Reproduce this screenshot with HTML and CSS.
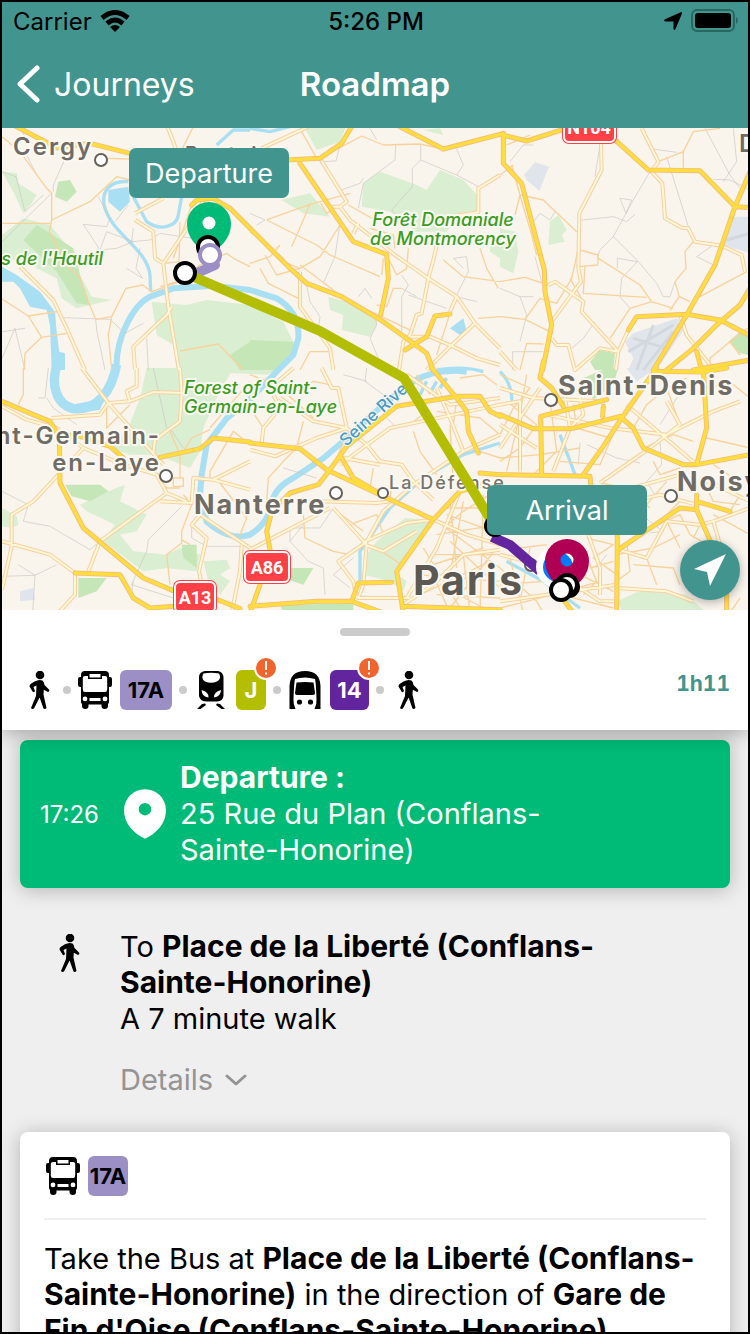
FILE: index.html
```html
<!DOCTYPE html>
<html lang="en">
<head>
<meta charset="utf-8">
<meta name="viewport" content="width=device-width, initial-scale=1">
<title>Roadmap</title>
<link rel="stylesheet" href="styles.css">
</head>
<body>
<svg class="sprite" aria-hidden="true">
  <symbol id="walk" viewBox="0 0 34 38">
    <circle cx="18" cy="4" r="4.3"/>
    <path d="M12.500 10.500Q17 8 20.500 9.500Q22 10.500 22.500 14L27 18.500Q28 20.500 26 21L21.800 18.800L21.500 23.500L24.500 37Q23 38.500 21.500 37.500L17.600 26.500L12 37.500Q10 38.500 9 37L14 25L14.500 14.500L11.500 16L13 20Q12 22 10.500 20.500L7.500 15.500Q7.500 13.500 9 12.700Z"/>
  </symbol>
  <symbol id="bus" viewBox="0 0 34 38">
    <path fill-rule="evenodd" d="M7 0H27Q31 0 31 4V6H32Q34 6 34 8V14Q34 16 32 16H31V31Q31 32 30 33V35Q30 38 26.800 38Q23.500 38 23.500 35V33.500H10.500V35Q10.500 38 7.300 38Q4 38 4 35V33Q3 32 3 31V16H2Q0 16 0 14V8Q0 6 2 6H3V4Q3 0 7 0ZM11.500 3V6.500H22.500V3ZM4.800 7V18.500Q4.800 21 7 21H27Q29.200 21 29.200 18.500V7Q29.200 5 27 5H24V8H10V5H7Q4.800 5 4.800 7ZM7 25.500A2.400 2.400 0 1 0 7 30.300A2.400 2.400 0 1 0 7 25.500ZM27 25.500A2.400 2.400 0 1 0 27 30.300A2.400 2.400 0 1 0 27 25.500ZM11.500 27V30H22.500V27Z"/>
  </symbol>
  <symbol id="train" viewBox="0 0 34 38">
    <path fill-rule="evenodd" d="M11 0H24Q29 1 29.500 6V25Q29 30 23 30.500H12Q6 30 5 25V6Q5 1 11 0ZM9.500 2.500Q6.500 8 11 10.500Q17 13 23 10.500Q28 8 25 2.500Q17 1 9.500 2.500ZM7.500 19Q8 26 14.500 26.500Q15 21 7.500 19ZM27 19Q19.500 21 20 26.500Q26.500 26 27 19Z"/>
    <path d="M11 32.500L8 33L3 38H6.500L12 34ZM23 32.500L26 33L31 38H27.500L22 34Z"/>
  </symbol>
  <symbol id="metro" viewBox="0 0 34 38">
    <path d="M1.500 38V15Q2 0 17 0Q32 0 32.500 15V38Z"/>
    <path class="metro-body" d="M7 8Q17 5 27 8Q28 12 28.500 28Q29 33 26.500 38H7.500Q5 33 5.500 28Q6 12 7 8Z"/>
    <path d="M8.500 11.500Q17 10.500 25.500 11.500L27 22Q27 24 25 24H9Q7 24 7 22Z"/>
    <circle cx="11.500" cy="31" r="2.600"/><circle cx="22.500" cy="31" r="2.600"/>
  </symbol>
  <symbol id="pin" viewBox="0 0 44 52">
    <path fill-rule="evenodd" d="M22 0A22 22 0 0 1 44 22C44 36 34 46 22 52C10 46 0 36 0 22A22 22 0 0 1 22 0ZM22 14.500A6.500 6.500 0 1 0 22 27.500A6.500 6.500 0 1 0 22 14.500Z"/>
  </symbol>
</svg>

<div class="app">
  <header class="topbar">
    <div class="status">
      <span class="carrier">Carrier
        <svg class="wifi" viewBox="0 0 30 22" aria-hidden="true"><path d="M2 8Q15-3 28 8M7 13.500Q15 6.500 23 13.500"/><path class="wifi-tip" d="M15 22L10 17Q15 13 20 17Z"/></svg>
      </span>
      <span class="clock">5:26 PM</span>
      <span class="indicators">
        <svg class="location" viewBox="0 0 18 18" aria-hidden="true"><path d="M17.300 0Q18.500 0 18 1.500L11.500 17Q10 19 9.500 17V9.500H1.500Q-1 9 1 7.300Z"/></svg>
        <svg class="battery" viewBox="0 0 48 24" aria-hidden="true"><rect class="battery-case" x="1" y="1" width="42" height="21" rx="5"/><rect x="4" y="4" width="36" height="15" rx="3"/><path class="battery-cap" d="M45 8Q49 11.500 45 15Z"/></svg>
      </span>
    </div>
    <nav class="navbar">
      <a class="back" href="#">
        <svg viewBox="0 0 24 38" aria-hidden="true"><path d="M21 3L4 19L21 35"/></svg>Journeys
      </a>
      <h1 class="title">Roadmap</h1>
    </nav>
  </header>

  <section class="map" aria-label="Journey map">
    <svg class="map-canvas" viewBox="2 128 746 482" preserveAspectRatio="xMidYMid slice">
      <defs>
        <g id="avenues">
          <g transform="translate(0 375)"><path d="M60 425L160 525L200 610L255 735M405 265L490 220M405 285L460 320L465 400L490 415L505 545L537 735M490 415L575 290L620 210M515 545L500 570L400 665L405 735M500 0L520 50L530 80"/></g>
          <g transform="translate(750 375)"><path d="M35 70L175 5M210 100L290 230L270 245L300 285L435 390L485 425L535 460L620 515L675 595L750 670M535 460L550 405L565 340L560 320M600 275L685 262L685 190L750 150M535 460L515 565L500 570L480 630L460 650L447 735M245 245L275 245M325 295L310 325M150 440L150 545L240 670L250 735M480 635L540 635L610 665L680 700L750 720M675 595L600 665L530 735M620 515L600 560"/></g>
          <g transform="translate(1500 375)"><path d="M303 55L305 135L238 265L235 430L243 470L155 590M425 10L475 110L455 140L487 175L495 280L545 308L565 310L585 350L665 362L725 390L735 440M145 480L165 470L250 530L245 560L355 680L348 735M355 680L300 670L225 735L205 660L170 660L155 640M0 680L50 735M385 615L355 680M540 570L560 630L630 720"/></g>
          <g transform="translate(0 1104)"><path d="M6 115L80 155L170 180L250 240L370 290L470 320L500 375L560 400M245 0L325 105L400 190L490 290M325 105L390 100L460 72L550 75M325 105L300 140L155 150M410 0L410 55L380 70L390 100M540 0L545 75L540 160L465 215L460 255M500 375L300 520L265 610M250 240L100 400L35 440L35 535L6 665M6 520L80 540L150 560L225 615L225 680L175 735M480 400L575 405L580 330L640 335L750 280M640 335L750 365M600 440L750 540M600 440L575 470L620 510L597 610L603 640M725 530L720 610L695 735"/></g>
          <g transform="translate(750 1104)"><path d="M215 0L245 60L265 60L290 180L350 230L390 280L455 290L490 340L550 395M0 245L75 265L200 210L290 180M35 225L40 180L90 120L60 60L130 0M90 90L190 160L290 180M270 290L420 180L540 155L750 110M390 290L280 270M250 420L345 525L265 580L310 640L320 690M345 530L400 430L490 350L640 250L750 200M205 400L380 405L420 400M345 520L470 465L550 455M0 545L240 420M350 530L340 650L325 690L480 690M550 455L650 500L750 530M470 690L560 540L630 370M345 530L400 550L500 490M460 710L550 650L640 560L750 545M640 250L600 150L560 60M470 20L600 110L750 90"/></g>
          <g transform="translate(1500 1104)"><path d="M0 60L100 90L300 100M140 140L330 180L500 200L640 130L720 100M380 110L590 290M300 345L450 240L540 170L500 100M0 240L120 60M0 110L60 100L60 310M210 180L250 140L240 90M350 660L500 670L580 700M355 545L440 570L500 460L600 470L640 460L660 530M640 460L750 420M400 400L480 380L590 410M600 330L750 400M360 370L540 320M0 700L350 650M0 560L120 590M240 660L300 700L350 700M265 500L300 600L300 680M0 170L110 240M190 60L210 180L160 310"/></g>
        </g>
        <g id="highways">
          <g transform="translate(0 375)"><path d="M40 0L170 68L270 55L390 85M575 240L590 225L640 220L690 250L750 310"/></g>
          <g transform="translate(750 375)"><path d="M110 105L210 100L275 55L305 5M0 310L120 430L170 475L275 515L400 590L490 655L530 685L550 735M150 115L310 350L410 388L415 460L392 570M450 5L580 72L750 28M465 675L530 635L555 573L600 567"/></g>
          <g transform="translate(1500 375)"><path d="M0 28L80 48L200 10M10 25L10 115L65 175L133 435L135 500L155 600L128 735M340 40L445 135L600 137L705 245L750 248M750 140L705 245L645 420L560 570L460 735M385 615L410 575L560 568L660 585L750 632M750 490L720 540L650 600L580 670L500 735M590 680L605 735M580 735L750 705"/></g>
          <g transform="translate(0 1104)"><path d="M6 100L100 140L150 160L178 205L180 345L250 480L430 630L525 670M180 200L240 205L330 235L370 270M480 268L600 242L640 210L750 222M225 615L360 620L400 690L450 720L525 715M640 690L720 722"/></g>
          <g transform="translate(750 1104)"><path d="M0 225L150 242L230 305L390 380L550 455L630 370L700 350M240 305L290 235L440 115L620 85L690 85L720 130L750 145M240 305L205 350L120 375L65 430L50 490L60 545M550 455L440 610L460 735M545 0L620 90L650 130L655 190L685 255M275 270L310 330L420 395M0 715L200 700L305 700L325 645L425 643M305 700L400 735M0 735L30 650M460 715L750 725M690 315L750 320"/></g>
          <g transform="translate(1500 1104)"><path d="M130 -20L120 30L155 60L190 115M0 140L100 182L215 182L360 145L400 180L430 240L550 290L590 290L620 180L610 0M125 320L122 145L320 95M0 320L270 325L272 350M250 320L310 235L365 150L470 0M460 10L610 12L680 0M590 290L750 260M590 380L590 425L640 540L680 640L680 735M590 400L690 430M355 545L540 420L590 425M352 500L350 735M310 115L308 145M150 640L220 735"/></g>
        </g>
      </defs>
      <rect class="land" x="0" y="126" width="750" height="486"/>
      <g transform="scale(.33333)">
        <g class="park">
          <path transform="translate(0 375)" d="M6 140L50 145L55 175L110 210L95 235L70 265L40 200ZM6 330L70 280L150 300L225 390L240 450L275 515L335 525L230 550L185 520L170 460L110 430L60 400L6 410ZM455 530L560 540L620 525L750 540V735H530L520 660L470 630Z"/>
          <path transform="translate(750 375)" d="M160 0H290L270 50L200 75ZM520 15L570 10L580 30ZM95 225L180 205L240 275L160 265ZM340 175L390 140L500 180L530 195L570 135L640 165L690 220L690 260L620 280L590 320L500 320L420 260L335 245ZM235 515L330 540L380 570L380 600L360 635L275 615L280 570L240 555ZM720 340L750 330V400L720 380ZM0 540L100 590L130 650L80 735H0Z"/>
          <path transform="translate(1500 375)" d="M150 290L175 270L200 315L185 330L195 350L145 360ZM0 310L45 320L55 380L40 445L0 425Z"/>
          <path transform="translate(0 1104)" d="M440 0H700L650 90L610 180L600 250L570 300L470 260L390 260L330 240L385 180L420 90ZM240 410L325 370L375 350L360 400L440 440L410 490L360 500L400 550L500 560L540 540L600 560L590 610L500 600L430 610L310 520L345 470L260 430ZM610 580L680 575L690 600L660 620L690 640L660 680L625 640ZM6 420L50 445L55 470L35 480L6 475Z"/>
          <path transform="translate(750 1104)" d="M380 520L465 450L540 455L520 500L430 610L470 640L460 670L420 640L340 620L350 560ZM-60 0H100L50 20L-60 15Z"/>
          <path transform="translate(1500 1104)" d="M350 700L440 660L560 680L620 735H370Z"/>
        </g>
        <g class="wood">
          <path transform="translate(0 375)" d="M175 170L210 165L230 200L200 230L165 215ZM110 300L220 370L240 450L270 540L230 535L170 440L70 345ZM750 650L690 690L720 735H750Z"/>
          <path transform="translate(750 375)" d="M0 645L130 650L130 690L80 735H0Z"/>
          <path transform="translate(1500 375)" d="M270 710L300 675L345 685L340 735H285ZM685 650L720 620L750 640V690L720 685Z"/>
          <path transform="translate(0 1104)" d="M195 350L300 350L325 370L270 400L215 385ZM545 530L590 530L590 600L550 570ZM235 630L320 630L290 670L235 690Z"/>
          <path transform="translate(750 1104)" d="M120 600L190 600L160 650L100 630ZM90 712L310 705V735H100Z"/>
          <path transform="translate(1500 1104)" d="M250 30L310 5L355 0L340 50L280 95L265 70Z"/>
        </g>
        <g class="airport">
          <path transform="translate(1500 375)" d="M72 150L105 112L147 125L118 197L80 165ZM700 275H750V385L670 360ZM375 650L400 625L530 580L560 600L470 735H385L400 700Z"/>
          <path transform="translate(0 1104)" d="M60 670L100 660L105 695L60 700Z"/>
          <path transform="translate(1500 1104)" d="M380 0H470L410 40Z"/>
        </g>
        <path class="runway" transform="translate(1500 375)" d="M385 680L520 600M400 640L500 670M410 735L460 600M430 735L520 620M680 345L750 325"/>
        <g class="lake">
          <path transform="translate(0 375)" d="M325 195L385 185L390 230L360 260L325 230ZM6 425L50 450L120 500L165 560L170 620L178 680L195 685V735H155L150 600L140 555L90 545L60 490L40 470L6 470Z"/>
          <path transform="translate(750 375)" d="M600 610L640 580L650 620L630 630Z"/>
          <path transform="translate(0 1104)" d="M215 110L290 95L315 90L300 125L240 135Z"/>
        </g>
        <g class="river thin">
          <path transform="translate(0 375)" d="M385 170C330 165 300 200 315 250C340 330 440 370 450 450L452 500M400 215L440 290C480 320 530 305 535 270L545 215M750 15L700 15L650 60"/>
          <path transform="translate(750 375)" d="M0 10L60 20L120 5M560 735Q640 722 700 740"/>
          <path transform="translate(750 1104)" d="M330 640L330 550L420 420L520 330L640 260L750 225M510 80L530 40M540 75L560 40M570 60L590 30"/>
          <path transform="translate(1500 1104)" d="M180 200L225 320M20 580L130 640L240 720M0 10Q40 50 35 110"/>
        </g>
        <g class="river">
          <path transform="translate(0 375)" d="M350 735C345 640 400 540 450 515L520 490L640 482L750 495L830 520Q900 560 895 640L880 690L830 740L750 823L680 880L620 959L605 1050L600 1110L620 1190Q690 1250 750 1229Q800 1200 815 1140Q820 1090 880 1059L970 1000L1030 949L1150 839L1240 769Q1310 729 1400 740"/>
          <path class="wide" transform="translate(0 1104)" d="M172 -10C150 50 170 110 220 122C290 130 335 70 350 -10"/>
        </g>
        <g class="lane">
          <path transform="translate(0 375)" d="M6 140L48 155L75 260L130 210M205 80L160 180L160 200M80 90L110 150M295 215L330 280L320 305L250 298L300 375L320 320L400 350L350 370L300 375L260 395L190 385M400 310L395 350L450 345L480 325L610 345M345 290L385 240M420 370L408 430L428 460L380 430M190 578L330 583L375 625L430 595M287 583L290 615L315 735M45 610L75 735M45 610L6 700M440 640L445 735M6 350L155 205M75 610L6 620M60 10L90 60"/>
          <path transform="translate(750 375)" d="M270 60L258 108L210 110M437 60L435 105L340 175L325 250M512 60L512 105L620 150L685 185M512 105L487 130L487 185L425 255L475 310M270 295L255 395L220 475M620 72L640 120L620 150M325 515L345 490L365 520M650 395L655 440L620 510M650 395L610 400L640 430M455 450L475 480L455 515L455 620M475 510L590 550M170 480L180 530L210 575L205 610M375 570L380 600L360 640L385 700M0 265L45 285L20 300M275 195L330 175L340 160M360 10L380 45M455 490L500 515M620 515L680 530"/>
          <path transform="translate(1500 375)" d="M460 72L530 82M500 95L565 305M450 140L400 225L378 265L340 335L300 375L290 400M340 335L415 410L470 475L490 515L510 515L525 470M245 285L340 275L380 290L405 268M360 220L395 225L378 265ZM300 60L285 155M615 10L690 150L720 190M700 10L710 110L670 170M640 163L690 165L750 195M352 430V400L412 410L365 460L360 515L390 550M285 590L250 640L215 670M640 360L590 395L640 420M30 110L70 60L100 60M100 290L120 265L150 285L165 260M0 490L60 515L80 570L60 650M105 395L125 470M38 735V680H130M60 515H100"/>
          <path transform="translate(0 1104)" d="M145 0L135 90L115 90M140 90L160 120L230 170M6 370L85 410L70 460L150 475L270 545L300 520M460 0L500 180M545 415L445 515L440 550L395 650L520 690M6 625L105 622L170 590M55 590L105 622L98 735M575 470L575 510L620 535L720 535M400 640L395 670M510 180L550 240"/>
          <path transform="translate(750 1104)" d="M350 0L345 40L400 80L400 140L440 180M250 420L210 480L120 480L120 520L175 580L220 600L225 680M280 20L350 40M100 300L200 330M310 570L250 620L300 660M120 520L160 470"/>
          <path transform="translate(1500 1104)" d="M540 75L480 170M260 230L350 270L420 285M480 220L485 290L440 340M440 340L470 390M320 560L290 600M410 430L490 490L450 495M240 225L235 290"/>
        </g>
        <g class="street">
          <path transform="translate(0 375)" d="M6 35L60 80L140 190L155 205V285L148 320L205 425L240 460L265 530L287 583L335 575L378 490L428 480L455 500L540 470M6 295H155M155 285L270 230L350 155L390 165M320 100L390 102M6 522L85 573L170 560M85 573L125 637L75 685L72 735M125 637L200 625M335 578L325 630L335 735M540 290L537 410L490 415M480 485L530 470L600 420L680 385L700 400L750 425M540 678L655 657L730 735M580 5L545 75M575 240L520 400"/>
          <path transform="translate(750 375)" d="M50 285L180 238L300 205M50 285L200 360L240 390L390 455M180 238L125 365M100 410L150 430L210 395L270 300M0 415L60 395L90 360M45 390L80 450L150 430M30 430L55 475L145 520M155 20L200 100M210 100L335 33L400 60L510 57L580 72M475 370L470 430L440 450L415 400M400 400L395 450M455 490L430 490L410 545L380 540M580 405L640 455L750 470M690 370L710 430L745 490M280 520L490 620M150 735L180 680L235 680M200 600L240 625L380 700M600 565L560 690M685 580L750 575M295 240L375 285L370 310M360 310L430 330L435 370M0 320L100 400M210 230L230 265L260 245M150 420L270 510"/>
          <path transform="translate(1500 375)" d="M60 210L130 225L230 320M45 270L60 210L35 120M60 210L95 330L110 390M475 110L550 80L580 20L660 10M550 80V130M240 375L295 390L293 420L240 425M295 400L420 480L455 530L520 550M255 420L250 505L440 517M455 530L390 550L330 640M580 350L555 380L558 430L525 470L538 515L570 530M538 515L510 555M590 520L740 440M0 470L75 457L145 480M0 575L75 583L160 625M75 583L120 520L170 535L215 460L235 370M60 735L80 655L130 657M750 605L690 650L720 690M630 720V700L690 650M0 150L40 120M20 60L90 30M210 460L250 530"/>
          <path transform="translate(0 1104)" d="M70 0V80L55 110M390 110L320 180V120M510 190L540 260V330M630 185L575 210L550 250M630 180L750 40M550 380L575 410L545 490V525L500 560L510 650M545 515L570 530M630 330V310L700 190L750 230M660 345L740 450L720 500M520 330H550V355H520ZM480 340L500 360H540"/>
          <path transform="translate(750 1104)" d="M560 460L750 600M600 400L620 600M640 400L600 620M580 420H750M560 500L750 470M540 560H750M500 620L750 640M540 600L600 735M640 560L660 735M700 380L690 735M560 680L750 690M160 440L165 510L250 550L300 560M50 400L55 330L100 280L140 240M370 300L360 360M490 190L510 250L560 320M600 170L610 350M740 50L700 20L630 30M380 540L455 590M590 440L700 480L750 440M580 480L640 430L720 380M520 600L700 540M600 520L750 660M520 540L640 735M740 540L600 720M0 20L80 50L190 150M440 0L480 60L530 130L480 170M120 80L190 40L240 50M0 120L40 180M160 160L140 240M300 180L260 270M430 320L420 390M300 470L380 440L400 500M260 430L340 490M490 690L720 580M560 130L690 150L750 200M620 90L610 170M690 250L750 270M590 660L700 720M500 20L540 80"/>
          <path transform="translate(1500 1104)" d="M0 20L90 60L40 120L0 200M20 100L110 170L60 240L0 280M80 20L60 140L20 310M150 100L170 250L100 320M220 110L230 180L330 210M0 270L120 260L240 240M180 280L300 290L360 150M300 345L380 360L450 420M430 240L520 200L580 220M620 210L750 240M400 180L440 110L500 60L560 30M500 60L540 170M600 60L700 50L750 90M640 290L700 330M460 280L480 320L540 300M0 510L60 540L140 530M0 600L110 700L130 735M30 570L70 735M0 650L130 640M0 720L160 680L300 640M90 540L60 700M260 510L340 530L280 570L350 620M270 600L340 580M250 540L290 640L250 680M350 560L460 540L540 500M380 520L390 610L350 640M400 590L520 600L540 650M440 570L470 650M450 480L540 440L570 500L640 540M500 460L540 540M360 410L440 410L500 340M640 440L750 500M690 430L720 380M600 470L580 510M540 400L460 480M300 360L360 420M610 340L640 400L720 410M240 620L340 670M180 680L340 720M690 735L720 690M280 390L350 480"/>
        </g>
        <g class="avenue-edge"><use href="#avenues"/></g>
        <g class="avenue"><use href="#avenues"/></g>
        <g class="highway-edge"><use href="#highways"/></g>
        <g class="highway"><use href="#highways"/></g>
      </g>

      <g class="town">
        <text x="13" y="155">Cergy</text>
        <text class="suburb" x="185" y="161">Pontoise</text>
        <text x="739" y="152">D</text>
        <text class="city" x="558" y="395">Saint-Denis</text>
        <text x="161" y="444" text-anchor="end">Saint-Germain-</text>
        <text x="161" y="471" text-anchor="end">en-Laye</text>
        <text class="city" x="194" y="514">Nanterre</text>
        <text class="city" x="677" y="491">Noisy-le-Sec</text>
      </g>
      <text class="district" x="389" y="489">La Défense</text>
      <text class="capital" x="413" y="595">Paris</text>
      <g class="forest">
        <text x="443" y="226" text-anchor="middle">Forêt Domaniale</text>
        <text x="443" y="245" text-anchor="middle">de Montmorency</text>
        <text x="103" y="265" text-anchor="end">s de l'Hautil</text>
        <text x="184" y="394">Forest of Saint-</text>
        <text x="184" y="413">Germain-en-Laye</text>
      </g>
      <text class="water-name" transform="translate(346 447) rotate(-42)">Seine River</text>
      <g class="town-dot">
        <circle cx="101" cy="160" r="6"/><circle cx="551" cy="400" r="6"/><circle cx="166" cy="476" r="6"/>
        <circle cx="336" cy="493" r="6"/><circle cx="383" cy="493" r="5"/><circle cx="671" cy="496" r="6"/><circle cx="531" cy="565" r="6"/>
      </g>
      <g class="shield">
        <rect x="562" y="112" width="55" height="32" rx="7"/><rect class="shield-line" x="564" y="114" width="51" height="28" rx="5"/><text x="589" y="134">N104</text>
        <rect x="243" y="550" width="48" height="34" rx="7"/><rect class="shield-line" x="245" y="552" width="44" height="30" rx="5"/><text x="267" y="574">A86</text>
        <rect x="173" y="580" width="44" height="34" rx="7"/><rect class="shield-line" x="175" y="582" width="40" height="30" rx="5"/><text x="195" y="604">A13</text>
      </g>

      <path class="leg bus-leg" d="M210 256L215 265L197 273"/>
      <path class="leg train-leg" d="M187 274L320 331L404 378L494 525"/>
      <path class="leg metro-leg" d="M492 537L510 545L540 571"/>
      <circle class="stop" cx="495" cy="526" r="9"/>
      <circle class="gps-halo" cx="557" cy="567" r="21"/>
      <circle class="gps" cx="558" cy="567" r="15"/>
      <path class="pin-hole" d="M209 214A9 9 0 1 1 208 214Z"/>
      <use class="pin-start" href="#pin" x="187" y="202" width="44" height="52"/>
      <use class="pin-end" href="#pin" x="545" y="539" width="44" height="52"/>
      <circle class="stop" cx="208" cy="247" r="10"/>
      <circle class="stop bus-stop" cx="210" cy="255" r="10"/>
      <circle class="stop" cx="185" cy="273" r="10"/>
      <circle class="stop" cx="569" cy="587" r="9"/><circle class="stop" cx="567" cy="585" r="10"/>
      <circle class="stop" cx="561" cy="590" r="10"/>
      <g class="callout">
        <rect x="129" y="148" width="160" height="50" rx="7"/><text x="209" y="183">Departure</text>
        <rect x="487" y="485" width="160" height="50" rx="7"/><text x="567" y="520">Arrival</text>
      </g>
    </svg>
    <button class="locate" type="button" aria-label="Centre on my position">
      <svg viewBox="0 0 32 32" aria-hidden="true"><path d="M32 0L16 32L13 18L0 15Z"/></svg>
    </button>
  </section>

  <section class="sheet">
    <div class="handle"></div>
    <div class="summary">
      <div class="modes">
        <svg class="mode"><use href="#walk"/></svg>
        <i class="dot"></i>
        <span class="ride"><svg class="mode"><use href="#bus"/></svg><b class="line line-bus">17A</b></span>
        <i class="dot"></i>
        <span class="ride"><svg class="mode"><use href="#train"/></svg><b class="line line-train">J<svg class="alert" viewBox="0 0 24 24" aria-label="Disruption"><circle cx="12" cy="12" r="11"/><path d="M12 5V14M12 16.500V18.500"/></svg></b></span>
        <i class="dot"></i>
        <span class="ride"><svg class="mode"><use href="#metro"/></svg><b class="line line-metro">14<svg class="alert" viewBox="0 0 24 24" aria-label="Disruption"><circle cx="12" cy="12" r="11"/><path d="M12 5V14M12 16.500V18.500"/></svg></b></span>
        <i class="dot"></i>
        <svg class="mode"><use href="#walk"/></svg>
      </div>
      <span class="duration">1h11</span>
    </div>
  </section>

  <main class="steps">
    <article class="card departure">
      <time class="time">17:26</time>
      <svg class="card-pin" aria-hidden="true"><use href="#pin"/></svg>
      <p class="copy"><strong>Departure :</strong><br>25 Rue du Plan (Conflans-Sainte-Honorine)</p>
    </article>
    <article class="walk">
      <svg class="mode" aria-hidden="true"><use href="#walk"/></svg>
      <div class="walk-body">
        <p class="copy">To <strong>Place de la Liberté (Conflans-Sainte-Honorine)</strong><br>A 7 minute walk</p>
        <button class="details" type="button">Details <svg viewBox="0 0 22 14" aria-hidden="true"><path d="M2 3L11 11L20 3"/></svg></button>
      </div>
    </article>
    <article class="card transit">
      <div class="transit-head"><svg class="mode" aria-hidden="true"><use href="#bus"/></svg><b class="line line-bus compact">17A</b></div>
      <p class="copy">Take the Bus at <strong>Place de la Liberté (Conflans-Sainte-Honorine)</strong> in the direction of <strong>Gare de Fin d'Oise (Conflans-Sainte-Honorine)</strong></p>
    </article>
  </main>
</div>
</body>
</html>
```
FILE: styles.css
```css
* { box-sizing: border-box; }
body { margin: 0; background: #000; color: #000; font-family: Inter, "Liberation Sans", sans-serif; }
p, h1 { margin: 0; }
button { border: 0; padding: 0; background: none; font: inherit; cursor: pointer; }
.sprite { position: absolute; width: 0; height: 0; }
.metro-body { fill: #fff; }

.app { display: flex; flex-direction: column; height: 100vh; border: 2px solid #000; overflow: hidden; background: #efefef; }

/* Header */
.topbar { flex: none; background: #42958e; }
.status { display: grid; grid-template-columns: 1fr auto 1fr; align-items: center; height: 38px; padding: 0 9px 0 11px; font-size: 24px; }
.carrier { display: flex; align-items: center; gap: 8px; }
.wifi { width: 30px; height: 22px; fill: none; stroke: #000; stroke-width: 5; }
.wifi-tip { fill: #000; stroke: none; }
.clock { font-weight: 500; }
.indicators { display: flex; justify-content: flex-end; align-items: center; gap: 9px; }
.location { width: 18px; height: 18px; }
.battery { width: 48px; height: 24px; }
.battery-case { fill: none; stroke: #296760; stroke-width: 2; }
.battery-cap { fill: #296760; }
.navbar { display: grid; grid-template-columns: 1fr auto 1fr; align-items: center; height: 88px; padding: 0 14px; color: #fff; }
.back { display: flex; align-items: center; gap: 14px; color: inherit; text-decoration: none; font-size: 32px; }
.back svg { width: 24px; height: 38px; fill: none; stroke: #fff; stroke-width: 5; stroke-linecap: round; stroke-linejoin: round; }
.title { font-size: 33px; font-weight: 600; }

/* Map */
.map { position: relative; flex: none; width: 100%; aspect-ratio: 746 / 482; overflow: hidden; }
.map-canvas { display: block; width: 100%; height: 100%; }
.land { fill: #f9f4ec; }
.park { fill: #daeed2; }
.wood { fill: #c5e6b6; }
.airport { fill: #dfe5ea; }
.runway { fill: none; stroke: #d2d8de; stroke-width: 9; }
.lake { fill: #a9dff2; }
.river { fill: none; stroke: #a9dff2; stroke-width: 18; stroke-linejoin: round; }
.thin { stroke-width: 10; }
.wide { stroke-width: 28; }
.lane { fill: none; stroke: #cac7c2; stroke-width: 2; }
.street { fill: none; stroke: #f9d29b; stroke-width: 4; stroke-linejoin: round; }
.avenue-edge { fill: none; stroke: #f9cfa2; stroke-width: 12; stroke-linejoin: round; }
.avenue { fill: none; stroke: #fff8d5; stroke-width: 6; stroke-linejoin: round; }
.highway-edge { fill: none; stroke: #f5bb7c; stroke-width: 15; stroke-linejoin: round; stroke-linecap: round; }
.highway { fill: none; stroke: #ffdd3c; stroke-width: 10; stroke-linejoin: round; stroke-linecap: round; }
.town, .district, .capital, .forest, .water-name { paint-order: stroke; stroke: #fbf8f2; stroke-width: 4px; stroke-linejoin: round; }
.town { fill: #6f6b65; font-size: 24px; font-weight: 600; letter-spacing: 2px; }
.suburb { font-size: 20px; }
.city { font-size: 27px; font-weight: 700; }
.district { fill: #77736d; font-size: 18px; font-weight: 500; letter-spacing: 2px; }
.capital { fill: #5c5852; font-size: 41px; font-weight: 700; letter-spacing: 2px; }
.forest { fill: #389d1d; font-size: 18px; font-weight: 500; font-style: italic; }
.water-name { fill: #4a9cc4; font-size: 17px; font-weight: 500; stroke-width: 2px; }
.town-dot { fill: #fff; stroke: #64605b; stroke-width: 2; }
.shield { fill: #ff4147; font-size: 18px; font-weight: 700; font-family: Roboto, "Liberation Sans", sans-serif; }
.shield-line { fill: none; stroke: #fff; stroke-width: 2; }
.shield text { fill: #fff; text-anchor: middle; }
.leg { fill: none; stroke-width: 10; stroke-linejoin: round; }
.bus-leg { stroke: #9b8fc5; }
.train-leg { stroke: #b4be00; }
.metro-leg { stroke: #62259d; }
.stop { fill: #fff; stroke: #000; stroke-width: 4; }
.bus-stop { stroke: #9b8fc5; }
.gps-halo, .pin-hole { fill: #fff; }
.gps { fill: #007aff; }
.pin-start { fill: #00bb77; }
.pin-end { fill: #b00053; }
.callout { fill: #42958e; font-size: 27px; }
.callout text { fill: #fff; text-anchor: middle; }
.locate { position: absolute; right: 8px; bottom: 10px; display: grid; place-items: center; width: 60px; height: 60px; border-radius: 50%; background: #42958e; box-shadow: 0 2px 10px rgb(0 0 0 / 30%); }
.locate svg { width: 32px; height: 32px; fill: #fff; }

/* Journey summary */
.sheet { position: relative; flex: none; height: 120px; padding-top: 18px; background: #fff; box-shadow: 0 2px 20px rgb(0 0 0 / 35%); clip-path: inset(0 0 -32px 0); }
.handle { width: 70px; height: 8px; margin: 0 auto; border-radius: 4px; background: #cbcbcb; }
.summary { display: flex; justify-content: space-between; padding: 34px 18px 0 20px; }
.modes { display: flex; align-items: center; gap: 7px; }
.ride, .transit-head { display: flex; align-items: center; gap: 8px; }
.mode { flex: none; width: 34px; height: 38px; }
.dot { width: 8px; height: 8px; border-radius: 50%; background: #cbcbcb; }
.line { position: relative; display: grid; place-items: center; height: 40px; border-radius: 6px; font-size: 22px; font-weight: 700; }
.line-bus { width: 52px; background: #9b8fc5; }
.line-train { width: 30px; background: #b4be00; color: #fff; }
.line-metro { width: 39px; background: #62259d; color: #fff; }
.compact { width: 40px; }
.alert { position: absolute; top: -14px; right: -12px; width: 24px; height: 24px; fill: #f0642d; stroke: #fff; stroke-width: 2; }
.duration { color: #42958e; font-size: 21px; line-height: 28px; font-weight: 700; font-variant-numeric: tabular-nums; }

/* Steps */
.steps { flex: 1; min-height: 0; padding: 10px 18px 0; overflow: hidden; }
.copy { font-size: 29px; line-height: 36px; }
.copy strong { font-size: 30px; line-height: 1; font-weight: 700; }
.card { border-radius: 8px; box-shadow: 0 2px 20px rgb(0 0 0 / 25%); }
.departure { display: grid; grid-template-columns: 84px 56px 1fr; align-items: center; padding: 20px 160px 20px 20px; background: #00bb77; color: #fff; }
.time { font-size: 24px; }
.card-pin { width: 42px; height: 50px; fill: #fff; }
.walk { display: flex; gap: 34px; padding: 41px 100px 34px 32px; }
.walk .mode { margin-top: 5px; }
.details { display: flex; align-items: center; gap: 12px; margin-top: 25px; color: #949494; font-size: 29px; line-height: 36px; }
.details svg { width: 22px; height: 14px; fill: none; stroke: currentColor; stroke-width: 3; stroke-linecap: round; stroke-linejoin: round; }
.transit { padding: 24px; background: #fff; }
.transit-head { padding: 0 0 22px 2px; margin-bottom: 21px; border-bottom: 2px solid #efefef; }
```
